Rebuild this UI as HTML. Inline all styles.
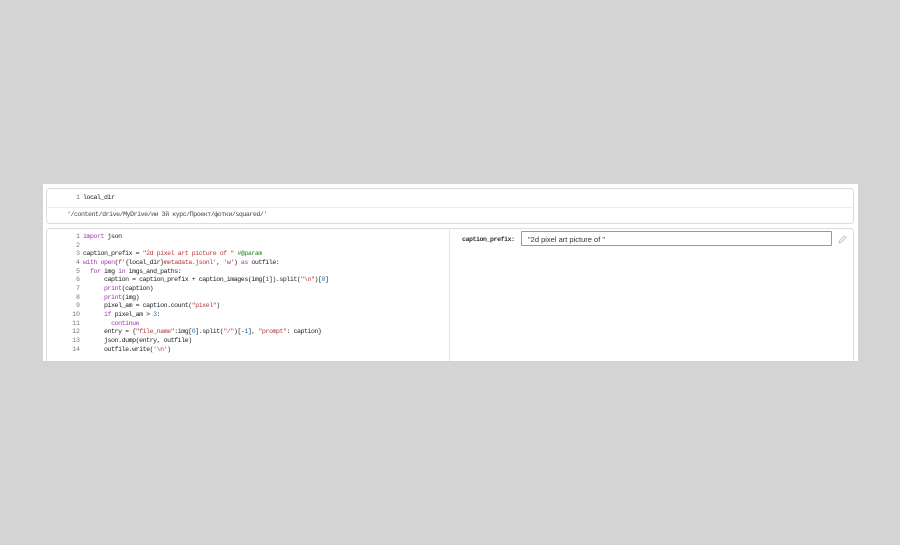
<!DOCTYPE html>
<html><head><style>
body{margin:0;width:900px;height:545px;background:#d3d4d3;position:relative;overflow:hidden;font-family:"Liberation Mono",monospace}
.wrap{position:absolute;left:43px;top:184px;width:815px;height:177px;background:#fff;overflow:hidden}
.c1{position:absolute;left:3px;top:4px;width:806px;height:34px;border:1px solid #dcdcdc;border-radius:4px}
.c1 .d{position:absolute;left:0;right:0;top:18px;border-top:1px solid #ececec}
.c2{position:absolute;left:3px;top:44px;width:806px;height:140px;border:1px solid #dcdcdc;border-radius:4px}
.sep{position:absolute;left:402px;top:0;bottom:0;border-left:1px solid #e2e2e2}
pre{margin:0;position:absolute;font-size:6.6px;line-height:8.65px;color:#222;font-family:"Liberation Mono",monospace;letter-spacing:-0.45px}
.n{color:#777;display:inline-block;width:33px;text-align:right;margin-right:3px;letter-spacing:0}
.k{color:#a03bb0}.s{color:#b33a3a}.g{color:#2a8a2a}.b{color:#1a6fb0}
.lab{position:absolute;left:415px;top:7px;font-size:6.6px;font-weight:bold;color:#333;letter-spacing:-0.45px}
.inp{position:absolute;left:474px;top:2px;height:15px;border:1px solid #999;border-radius:1px;font-family:"Liberation Sans",sans-serif;font-size:7.5px;line-height:15px;padding-left:6px;box-sizing:border-box;width:311px;color:#333}
</style></head><body>
<div class="wrap">
 <div class="c1">
  <pre style="left:0;top:5px"><span class="n">1</span>local_dir</pre>
  <div class="d"></div>
  <pre style="left:20px;top:22px;color:#444">'/content/drive/MyDrive/ии 3й курс/Проект/фотки/squared/'</pre>
 </div>
 <div class="c2">
  <pre style="left:0;top:4px"><span class="n">1</span><span class="k">import</span> json
<span class="n">2</span>
<span class="n">3</span>caption_prefix = <span class="s">"2d pixel art picture of "</span> <span class="g">#@param</span>
<span class="n">4</span><span class="k">with</span> <span class="k">open</span>(<span class="s">f'</span>{local_dir}<span class="s">metadata.jsonl'</span>, <span class="s">'w'</span>) <span class="k">as</span> outfile:
<span class="n">5</span>  <span class="k">for</span> img <span class="k">in</span> imgs_and_paths:
<span class="n">6</span>      caption = caption_prefix + caption_images(img[<span class="b">1</span>]).split(<span class="s">"\n"</span>)[<span class="b">0</span>]
<span class="n">7</span>      <span class="k">print</span>(caption)
<span class="n">8</span>      <span class="k">print</span>(img)
<span class="n">9</span>      pixel_am = caption.count(<span class="s">"pixel"</span>)
<span class="n">10</span>      <span class="k">if</span> pixel_am &gt; <span class="b">3</span>:
<span class="n">11</span>        <span class="k">continue</span>
<span class="n">12</span>      entry = {<span class="s">"file_name"</span>:img[<span class="b">0</span>].split(<span class="s">"/"</span>)[-<span class="b">1</span>], <span class="s">"prompt"</span>: caption}
<span class="n">13</span>      json.dump(entry, outfile)
<span class="n">14</span>      outfile.write(<span class="s">'\n'</span>)</pre>
  <div class="sep"></div>
  <div class="lab">caption_prefix:</div>
  <div class="inp">"2d pixel art picture of "</div>
  <svg style="position:absolute;left:791px;top:6px" width="9" height="9" viewBox="0 0 9 9"><path d="M1 8 L1.5 6 L6.5 1 L8 2.5 L3 7.5 Z" fill="none" stroke="#bbb" stroke-width="0.8"/></svg>
 </div>
</div>
</body></html>
